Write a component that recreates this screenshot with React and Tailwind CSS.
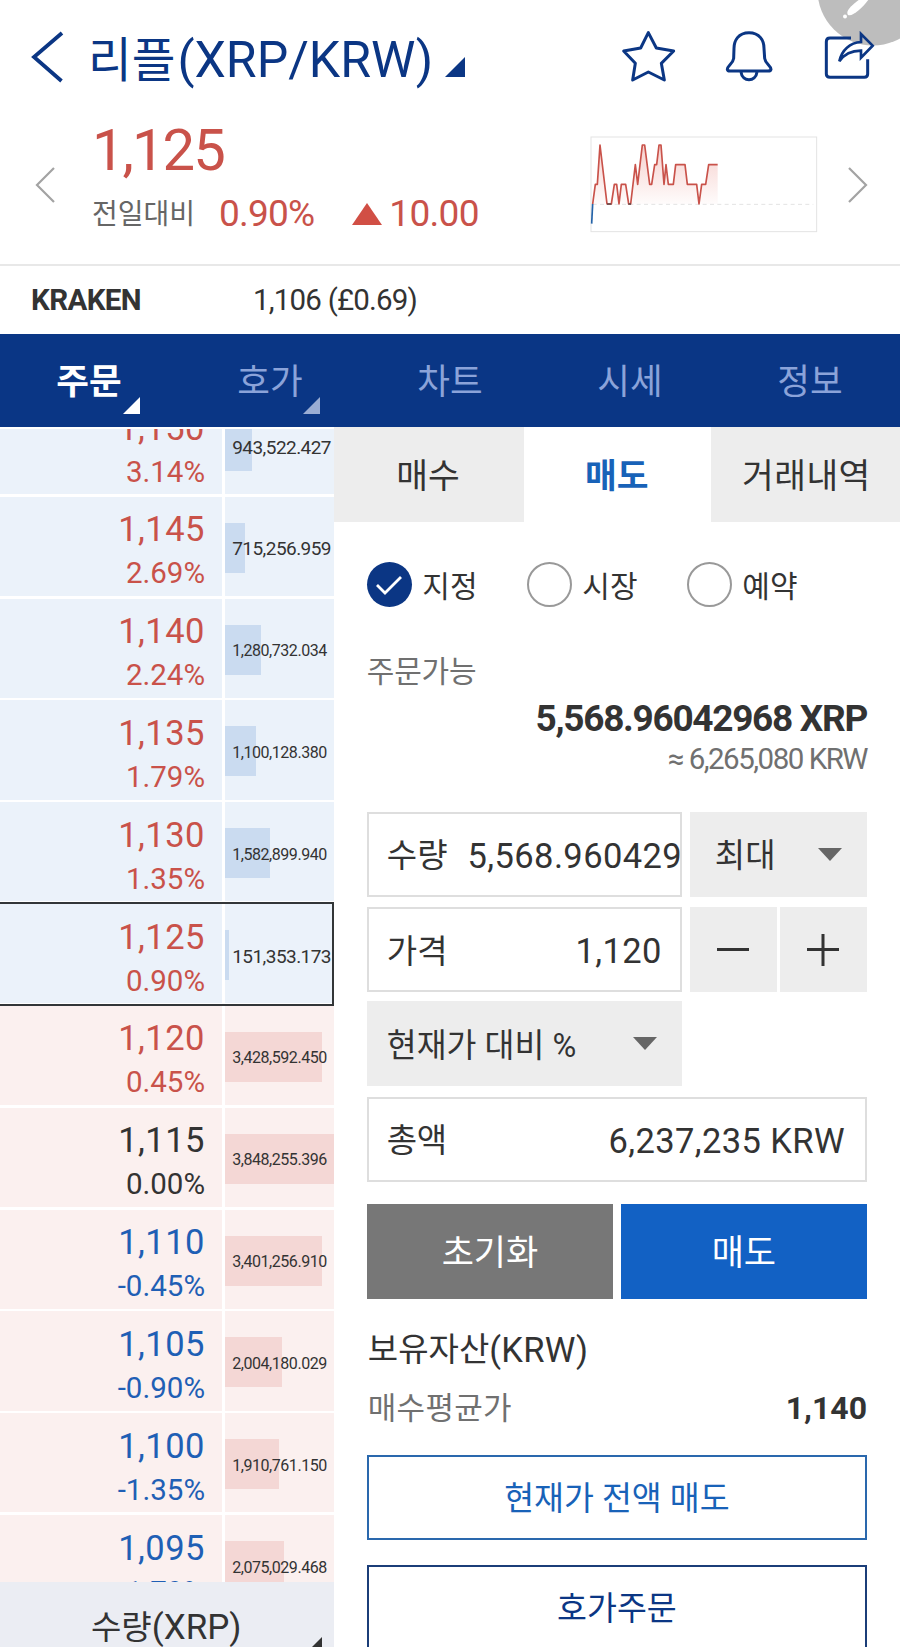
import React from 'react';

const MAX_VOLUME = 3848255.396;

const orders = [
  { price: '1,150', rate: '3.14%', volume: '943,522.427', side: 'ask', trend: 'up' },
  { price: '1,145', rate: '2.69%', volume: '715,256.959', side: 'ask', trend: 'up' },
  { price: '1,140', rate: '2.24%', volume: '1,280,732.034', side: 'ask', trend: 'up' },
  { price: '1,135', rate: '1.79%', volume: '1,100,128.380', side: 'ask', trend: 'up' },
  { price: '1,130', rate: '1.35%', volume: '1,582,899.940', side: 'ask', trend: 'up' },
  { price: '1,125', rate: '0.90%', volume: '151,353.173', side: 'ask', trend: 'up', current: true },
  { price: '1,120', rate: '0.45%', volume: '3,428,592.450', side: 'bid', trend: 'up' },
  { price: '1,115', rate: '0.00%', volume: '3,848,255.396', side: 'bid', trend: 'flat' },
  { price: '1,110', rate: '-0.45%', volume: '3,401,256.910', side: 'bid', trend: 'down' },
  { price: '1,105', rate: '-0.90%', volume: '2,004,180.029', side: 'bid', trend: 'down' },
  { price: '1,100', rate: '-1.35%', volume: '1,910,761.150', side: 'bid', trend: 'down' },
  { price: '1,095', rate: '-1.79%', volume: '2,075,029.468', side: 'bid', trend: 'down' },
];

const trendColor = {
  up: 'text-[#c9524a]',
  flat: 'text-[#333333]',
  down: 'text-[#1f5fb5]',
};

const navItems = [
  { label: '주문', active: true, corner: true },
  { label: '호가', corner: true },
  { label: '차트' },
  { label: '시세' },
  { label: '정보' },
];

const Corner = ({ className, size = 17 }) => (
  <svg width={size} height={size} viewBox="0 0 18 18" className={className} fill="currentColor">
    <path d="M18 0V18H0Z" />
  </svg>
);

const Caret = () => (
  <svg width="24" height="13" viewBox="0 0 24 13" className="fill-[#666666]">
    <path d="M0 0H24L12 13Z" />
  </svg>
);

const Header = () => (
  <header className="relative flex h-[116px] items-center overflow-hidden text-[#0b3684]">
    <svg width="34" height="56" viewBox="0 0 34 56" className="mb-[3px] ml-[30px] shrink-0" fill="none" stroke="currentColor" strokeWidth="3.800">
      <path d="M32 4L4 28L31.500 52" />
    </svg>
    <h1 className="ml-[24px] mt-[3px] flex h-[64px] items-center whitespace-nowrap text-[50px] leading-[64px]">
      <span className="mt-[2px] text-[47.500px]">리플</span>
      <span className="ml-[2px]">(XRP/KRW)</span>
    </h1>
    <Corner size={20} className="ml-[12px] mt-[18px]" />

    {/* Floating edit handle */}
    <svg width="110" height="60" viewBox="790 0 110 60" className="absolute right-0 top-0">
      <circle cx="873" cy="-10" r="55.500" fill="#bdbdbd" />
      <path d="M848 15C845 11 852 5 860 -1L869 -1C863 7 853 17 848 15Z" fill="#ffffff" />
      <circle cx="845" cy="16.500" r="2" fill="#ffffff" />
    </svg>

    <div className="absolute left-[621px] top-[29px] flex">
      <svg width="55" height="54" viewBox="183 87 165 162" fill="none" stroke="currentColor" strokeWidth="9" strokeLinejoin="round">
        <path d="M265 98L289 144L341 153L304 190L313 240L265 216L218 240L226 190L191 153L242 144Z" />
      </svg>
      <svg width="50" height="54" viewBox="492 87 150 162" className="ml-[48px]" fill="none" stroke="currentColor" strokeWidth="9" strokeLinejoin="round">
        <path d="M567 98C535 98 522 122 522 145L521 175C519 192 502 196 502 208Q503 213 510 213H624Q632 213 633 208C632 196 616 192 614 175L612 145C612 122 599 98 567 98Z" />
        <path d="M543 216C545 232 556 239 567 239S589 232 591 216" />
      </svg>
      <svg width="51" height="54" viewBox="792 87 153 162" className="ml-[50px]" fill="none" stroke="currentColor" strokeWidth="9">
        <path d="M873 114H810Q799 114 799 125V222Q799 232 810 232H913Q923 232 923 222V178" />
        <path d="M838 184C845 150 870 128 903 126V102L938 137L903 173V152C875 152 852 163 838 184Z" strokeWidth="8" />
      </svg>
    </div>
  </header>
);

const MiniChart = () => (
  <svg width="228" height="97" viewBox="90 407 684 291" fill="none">
    <defs>
      <linearGradient id="fade" x1="0" y1="0" x2="0" y2="1">
        <stop offset="0" stopColor="#e0574c" stopOpacity="0.28" />
        <stop offset="1" stopColor="#e0574c" stopOpacity="0.02" />
      </linearGradient>
    </defs>
    <rect x="93" y="410" width="677" height="284" stroke="#e3e3e3" strokeWidth="3" />
    <path
      d="M98 611L106 552H112L120 434L141 611H154L163 552H170L177 611L184 552H197L206 611H212L226 493L233 552L247 434H254L269 552H275L284 493H290L297 434H303L312 552L318 493L325 552H340L347 493H375L382 552H410L417 611L425 552H437L446 493H473V611Z"
      fill="url(#fade)"
    />
    <path d="M98 612H760" stroke="#e3e3e3" strokeWidth="3" strokeDasharray="12 10" />
    <path d="M95 670L98 611" stroke="#2463a8" strokeWidth="5" />
    <path
      d="M98 611L106 552H112L120 434L141 611H154L163 552H170L177 611L184 552H197L206 611H212L226 493L233 552L247 434H254L269 552H275L284 493H290L297 434H303L312 552L318 493L325 552H340L347 493H375L382 552H410L417 611L425 552H437L446 493H473"
      stroke="#c9524a"
      strokeWidth="5"
      strokeLinejoin="round"
    />
    <path d="M141 611H154M205 611H213" stroke="#5c4a4a" strokeWidth="5" />
  </svg>
);

const PriceSummary = () => (
  <section className="flex h-[150px] border-b-2 border-[#e8e8e8]">
    <svg width="20" height="36" viewBox="0 0 20 36" className="ml-[35px] mt-[51px] shrink-0" fill="none" stroke="#a3a3a3" strokeWidth="2.200">
      <path d="M19 1L2 18L19 35" />
    </svg>
    <div className="ml-[37px] w-[498px] text-[#c9524a]">
      <div className="mt-[1px] h-[66px] text-[58px] leading-[66px] tracking-[-2px]">1,125</div>
      <div className="mt-[10px] flex h-[42px] items-center text-[37px] leading-[42px]">
        <span className="mt-[2px] text-[28px] tracking-[0px] text-[#666666]">전일대비</span>
        <span className="ml-[24px] tracking-[-0.8px]">0.90%</span>
        <svg width="30" height="22" viewBox="0 0 30 22" className="ml-[38px] fill-[#d14f45]">
          <path d="M15 0L30 22H0Z" />
        </svg>
        <span className="ml-[7px] tracking-[-0.7px]">10.00</span>
      </div>
    </div>
    <div className="mt-[20px] w-[228px]">
      <MiniChart />
    </div>
    <svg width="20" height="36" viewBox="0 0 20 36" className="ml-[30px] mt-[51px] shrink-0" fill="none" stroke="#a3a3a3" strokeWidth="2.200">
      <path d="M1 1L18 18L1 35" />
    </svg>
  </section>
);

const NavBar = () => (
  <nav className="grid h-[93px] grid-cols-5 bg-[#0a3685]">
    {navItems.map((item) => (
      <div
        key={item.label}
        className={`relative h-[93px] text-center text-[35.5px] leading-[96px] ${item.active ? 'pr-[2px] font-bold text-white' : 'text-[#8ba3d9]'}`}
      >
        {item.label}
        {item.corner && (
          <Corner className={`absolute bottom-[13px] right-[40px] ${item.active ? 'text-white' : 'text-[#9aadd4]'}`} />
        )}
      </div>
    ))}
  </nav>
);

const OrderRow = ({ order }) => {
  const isAsk = order.side === 'ask';
  const cell = isAsk ? 'bg-[#ebf2fa]' : 'bg-[#fbf0ef]';
  const value = parseFloat(order.volume.replace(/,/g, ''));
  const isLong = order.volume.length > 11;

  return (
    <div className="relative flex h-[101.83px] shrink-0 gap-[2.700px] pb-[2.700px]">
      <div className={`w-[222px] pr-[17px] pt-[12.500px] text-right ${cell} ${trendColor[order.trend]}`}>
        <div className="h-[41px] text-[34.500px] leading-[41px] tracking-[0.5px]">{order.price}</div>
        <div className="mt-[3px] h-[41px] text-[29.500px] leading-[41px]">{order.rate}</div>
      </div>
      <div className={`relative flex-1 pt-[26px] ${cell}`}>
        <div
          className={`h-[50px] ${isAsk ? 'bg-[#cadbf0]' : 'bg-[#f4d7d5]'}`}
          style={{ width: `${(value / MAX_VOLUME) * 100}%` }}
        />
        <span
          className={`absolute left-[7.500px] top-[41.500px] h-[22px] leading-[22px] text-[#333333] ${isLong ? 'text-[16px] tracking-[-0.45px]' : 'text-[19px] tracking-[-0.55px]'}`}
        >
          {order.volume}
        </span>
      </div>
      {order.current && (
        <div className="absolute bottom-0 left-0 right-0 top-[-2px] border-y-2 border-r-2 border-[#333638]" />
      )}
    </div>
  );
};

const OrderBook = () => (
  <aside className="flex w-[334.300px] shrink-0 flex-col">
    <div className="mt-[2px] h-[1153px] overflow-hidden">
      <div className="mt-[-34px] flex flex-col">
        {orders.map((order) => (
          <OrderRow key={order.price} order={order} />
        ))}
      </div>
    </div>
    <div className="relative flex h-[65px] overflow-hidden bg-[#ebedf3] pl-[91px] text-[35px] leading-[92px] text-[#333333]">
      <span className="text-[33px]">수량</span>
      <span>(XRP)</span>
      <Corner size={19} className="absolute left-[303px] top-[55px]" />
    </div>
  </aside>
);

const Radio = ({ label, checked }) => (
  <div className="flex w-[160px] items-center gap-[10.500px]">
    {checked ? (
      <span className="flex size-[45px] items-center justify-center rounded-full bg-[#0b3684]">
        <svg width="28" height="22" viewBox="0 0 28 22" fill="none" stroke="#ffffff" strokeWidth="2.800">
          <path d="M2 11L10 19L26 3" />
        </svg>
      </span>
    ) : (
      <span className="size-[45px] rounded-full border-2 border-[#999999]" />
    )}
    <span className="mt-[3px] text-[30px] leading-[45px]">{label}</span>
  </div>
);

const TradePanel = () => (
  <main className="min-w-0 flex-1">
    <div className="flex h-[95px] text-[34.500px] leading-[99px]">
      <div className="w-[189.500px] bg-[#ededed] pr-[2px] text-center">매수</div>
      <div className="w-[187px] pr-[1px] text-center font-bold text-[#1862b8]">매도</div>
      <div className="flex-1 bg-[#ededed] pl-[2px] text-center tracking-[0.400px]">거래내역</div>
    </div>

    <div className="pl-[32.500px] pr-[33px]">
      <div className="mt-[40px] flex h-[45px] w-[480px]">
        <Radio label="지정" checked />
        <Radio label="시장" />
        <Radio label="예약" />
      </div>

      <div className="mt-[44px] h-[42px] text-[30px] leading-[42px] tracking-[-0.2px] text-[#707070]">주문가능</div>
      <div className="mt-[5px] h-[42px] whitespace-nowrap text-right text-[37px] font-bold leading-[42px] tracking-[-1.3px]">
        5,568.96042968 XRP
      </div>
      <div className="mt-[1px] h-[36px] text-right text-[29.500px] leading-[36px] tracking-[-1.5px] text-[#707070]">
        ≈ 6,265,080 KRW
      </div>

      <div className="mt-[35px] flex h-[85px] gap-[8px]">
        <div className="flex w-[315px] shrink-0 overflow-hidden whitespace-nowrap border-2 border-[#dedede] pl-[18px] leading-[84px]">
          <span className="shrink-0 text-[33px]">수량</span>
          <span className="ml-[20px] text-[34.500px] tracking-[0.4px]">5,568.960429</span>
        </div>
        <div className="flex flex-1 items-center justify-between bg-[#ededed] pl-[25px] pr-[25px]">
          <span className="mt-[3px] text-[33px]">최대</span>
          <Caret />
        </div>
      </div>

      <div className="mt-[10px] flex h-[85px] gap-[8px]">
        <div className="flex w-[315px] shrink-0 justify-between border-2 border-[#dedede] pl-[18px] pr-[18px] leading-[85px]">
          <span className="text-[33px]">가격</span>
          <span className="text-[34.500px] tracking-[0.4px]">1,120</span>
        </div>
        <div className="grid flex-1 grid-cols-2 gap-[3px]">
          <div className="flex items-center justify-center bg-[#ededed]">
            <span className="h-[3px] w-[32px] bg-[#333333]" />
          </div>
          <div className="flex items-center justify-center bg-[#ededed]">
            <svg width="32" height="32" viewBox="0 0 32 32" stroke="#333333" strokeWidth="3">
              <path d="M0 15.500H32M16 0V32" />
            </svg>
          </div>
        </div>
      </div>

      <div className="mt-[9px] flex h-[85px] w-[315px] items-center justify-between bg-[#ededed] pl-[20px] pr-[25px]">
        <span className="mt-[6px] text-[32.500px]">현재가 대비 %</span>
        <Caret />
      </div>

      <div className="mt-[11px] flex h-[85px] justify-between border-2 border-[#dedede] pl-[18px] pr-[20px] leading-[84px]">
        <span className="text-[33px] tracking-[-0.5px]">총액</span>
        <span className="text-[34.500px] tracking-[0.4px]">6,237,235 KRW</span>
      </div>

      <div className="mt-[21.500px] flex h-[95px] gap-[7.500px] text-center text-[35px] leading-[99px] text-white">
        <div className="flex-1 bg-[#777777]">초기화</div>
        <div className="flex-1 bg-[#1261c4]">매도</div>
      </div>

      <div className="mt-[27px] flex h-[48px] items-center pl-[1px] text-[34.500px] leading-[48px]">
        <span className="mt-[1px] text-[33px]">보유자산</span>
        <span className="tracking-[0.3px]">(KRW)</span>
      </div>
      <div className="mt-[13px] flex h-[42px] justify-between pl-[1px] leading-[42px]">
        <span className="pt-[1px] text-[31px] tracking-[0.3px] text-[#707070]">매수평균가</span>
        <span className="text-[32px] font-bold">1,140</span>
      </div>

      <div className="mt-[26.500px] h-[85px] border-2 border-[#2a68ad] text-center text-[32.500px] leading-[85px] text-[#1862b8]">
        현재가 전액 매도
      </div>
      <div className="mt-[25px] h-[85px] border-2 border-[#1b3d78] text-center text-[32.500px] leading-[85px] text-[#0b3684]">
        호가주문
      </div>
    </div>
  </main>
);

const App = () => (
  <div className="h-[1647px] w-[900px] overflow-hidden bg-white font-['Roboto','Noto_Sans_CJK_KR',sans-serif] text-[#333333]">
    <Header />
    <PriceSummary />
    <section className="flex h-[68px] items-center text-[29.500px] leading-[40px]">
      <span className="ml-[31px] w-[222px] font-bold tracking-[-0.6px]">KRAKEN</span>
      <span className="tracking-[-0.8px]">1,106 (£0.69)</span>
    </section>
    <NavBar />
    <div className="flex">
      <OrderBook />
      <TradePanel />
    </div>
  </div>
);

export default App;
